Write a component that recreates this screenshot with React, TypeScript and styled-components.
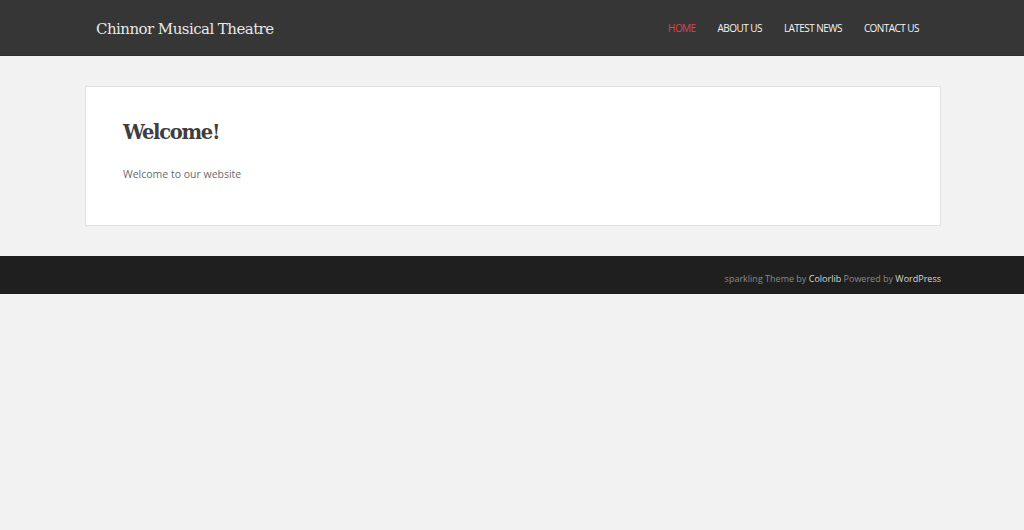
import styled, { createGlobalStyle } from "styled-components";

const GlobalStyle = createGlobalStyle`
  html, body {
    margin: 0;
    padding: 0;
    background: #f2f2f2;
  }
  * { box-sizing: border-box; }
`;

const navItems = ["Home", "About Us", "Latest News", "Contact Us"];

const App = () => {
  return (
    <Page>
      <GlobalStyle />
      <Header>
        <HeaderInner>
          <SiteTitle>Chinnor Musical Theatre</SiteTitle>
          <Nav>
            {navItems.map((item, i) => (
              <NavLink key={item} $active={i === 0}>
                {item}
              </NavLink>
            ))}
          </Nav>
        </HeaderInner>
      </Header>
      <Main>
        <Card>
          <Title>Welcome!</Title>
          <Text>Welcome to our website</Text>
        </Card>
      </Main>
      <Footer>
        <FooterInner>
          sparkling Theme by <FooterLink>Colorlib</FooterLink> Powered by{" "}
          <FooterLink>WordPress</FooterLink>
        </FooterInner>
      </Footer>
    </Page>
  );
};

export default App;

const Page = styled.div`
  width: 100%;
  min-height: 530px;
  background: #f2f2f2;
  font-family: "Open Sans", sans-serif;
`;

const Container = styled.div`
  width: 856px;
  margin-left: calc(50% - 427px);
`;

const Header = styled.header`
  height: 56px;
  background: #363636;
  border-bottom: 1px solid #2e2e2e;
`;

const HeaderInner = styled(Container)`
  display: flex;
  align-items: center;
  justify-content: space-between;
  height: 100%;
  padding: 0 22px 0 11px;
`;

const SiteTitle = styled.div`
  color: #e8e8e8;
  font-family: "DejaVu Serif", serif;
  font-size: 15px;
  letter-spacing: -0.55px;
  padding-top: 2px;
`;

const Nav = styled.nav`
  display: flex;
  gap: 22px;
`;

const NavLink = styled.span<{ $active?: boolean }>`
  color: ${({ $active }) => ($active ? "#da4453" : "#f4f4f4")};
  font-size: 10px;
  text-transform: uppercase;
  letter-spacing: -0.55px;
`;

const Main = styled.main`
  padding: 30px 0;
`;

const Card = styled(Container)`
  height: 140px;
  padding: 34px 37px 32px;
  background: #ffffff;
  border: 1px solid #e0e0e0;
`;

const Title = styled.h1`
  margin: 0 0 23px;
  color: #3e3e3e;
  font-family: "DejaVu Serif", serif;
  font-size: 19.5px;
  font-weight: bold;
  letter-spacing: -1.3px;
`;

const Text = styled.p`
  margin: 0;
  color: #6b6b6b;
  font-size: 10.5px;
`;

const Footer = styled.footer`
  height: 38px;
  background: #1f1f1f;
`;

const FooterInner = styled(Container)`
  display: flex;
  align-items: center;
  justify-content: flex-end;
  height: 100%;
  padding-top: 7px;
  color: #8a8a8a;
  font-size: 9px;
  white-space: pre;
`;

const FooterLink = styled.span`
  color: #d8d8d8;
`;
